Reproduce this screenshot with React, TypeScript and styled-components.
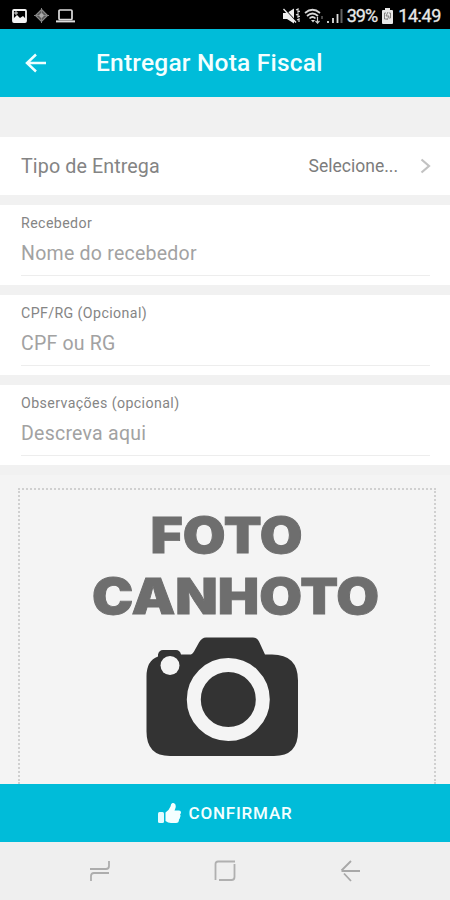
import React from 'react';
import styled, { createGlobalStyle } from 'styled-components';

const GlobalStyle = createGlobalStyle`
  * { box-sizing: border-box; }
  body { margin: 0; background: #f1f1f1; font-family: Roboto, sans-serif; }
`;

const Screen = styled.div`
  width: 450px;
  height: 900px;
  display: flex;
  flex-direction: column;
  overflow: hidden;
  background: #f1f1f1;
`;

const StatusBar = styled.div`
  flex: none;
  height: 29px;
  padding: 2px 9px 0 12px;
  display: flex;
  align-items: center;
  justify-content: space-between;
  background: #000;
  color: #e8e8e8;
`;

const StatusGroup = styled.div<{ $gap: number }>`
  display: flex;
  align-items: center;
  gap: ${(p) => p.$gap}px;
`;

const StatusText = styled.span<{ $spacing?: number }>`
  font-size: 18px;
  line-height: 20px;
  letter-spacing: ${(p) => p.$spacing ?? 0}px;
  white-space: nowrap;
  -webkit-text-stroke: 0.3px #e8e8e8;
`;

const Header = styled.header`
  flex: none;
  height: 68px;
  padding-left: 24px;
  display: flex;
  align-items: center;
  gap: 49px;
  background: #00bcd9;
`;

const Title = styled.h1`
  margin: 0;
  color: #f4ffff;
  font-size: 24.5px;
  line-height: 28px;
  font-weight: 500;
  letter-spacing: 0.22px;
  white-space: nowrap;
`;

const Form = styled.main`
  flex: none;
  padding-top: 40px;
  display: flex;
  flex-direction: column;
  gap: 10px;
`;

const SelectRow = styled.div`
  height: 58px;
  padding: 0 19px 0 21px;
  display: flex;
  align-items: center;
  background: #fff;
`;

const SelectLabel = styled.span`
  flex: 1;
  color: #848484;
  font-size: 19.7px;
  letter-spacing: 0.1px;
`;

const SelectValue = styled.span`
  margin-right: 22px;
  color: #7c7c7c;
  font-size: 17.5px;
`;

const Field = styled.label`
  height: 80px;
  padding: 9px 20px 0 21px;
  display: flex;
  flex-direction: column;
  background: #fff;
`;

const FieldLabel = styled.span`
  height: 18px;
  line-height: 18px;
  color: #858585;
  font-size: 14.2px;
  letter-spacing: 0.4px;
`;

const FieldHint = styled.span<{ $spacing: number }>`
  height: 44px;
  padding-top: 8px;
  border-bottom: 1px solid #ededed;
  line-height: 27px;
  color: #a2a2a2;
  font-size: 19.5px;
  letter-spacing: ${(p) => p.$spacing}px;
`;

const PhotoArea = styled.section`
  flex: 1;
  min-height: 0;
  margin-top: 10px;
  padding: 13px 14px 0 18px;
  background: #f4f4f4;
`;

const PhotoFrame = styled.div`
  height: 100%;
  border: 2px dotted #d0d0d0;
  border-bottom: 0;
  overflow: hidden;
`;

const ConfirmButton = styled.button`
  flex: none;
  height: 58px;
  padding: 0;
  border: 0;
  display: flex;
  align-items: center;
  justify-content: center;
  gap: 8px;
  background: #00bcd9;
  color: #f4ffff;
  font: 500 17px/20px Roboto, sans-serif;
  letter-spacing: 0.8px;
`;

const NavBar = styled.nav`
  flex: none;
  height: 58px;
  padding: 0 37px;
  display: grid;
  grid-template-columns: repeat(3, 1fr);
  place-items: center;
  background: #efefef;
`;

const Icon = styled.svg`
  display: block;
  flex: none;
`;

const fields = [
  { label: 'Recebedor', hint: 'Nome do recebedor', spacing: 0.25 },
  { label: 'CPF/RG (Opcional)', hint: 'CPF ou RG', spacing: 0.2 },
  { label: 'Observações (opcional)', hint: 'Descreva aqui', spacing: 0.25 },
];

function PictureIcon() {
  return (
    <Icon width="15" height="14" viewBox="0 0 15 14">
      <rect x="1" y="1" width="13" height="12" rx="1" fill="none" stroke="#f4f4f4" strokeWidth="1.8" />
      <path d="M1 12V10l4-4 3 3 3-2 3 3v3H1z" fill="#f4f4f4" />
      <path d="M4 2v4M2 4h4" stroke="#ddd" strokeWidth="1" />
    </Icon>
  );
}

function TargetIcon() {
  return (
    <Icon width="15" height="15" viewBox="0 0 15 15">
      <path d="M7.5 1.5l6 6-6 6-6-6z" fill="#555" stroke="#8a8a8a" strokeWidth="1.2" />
      <path d="M7.5 0v15M0 7.5h15" stroke="#858585" />
      <circle cx="7.5" cy="7.5" r="2.2" fill="#aaa" />
    </Icon>
  );
}

function LaptopIcon() {
  return (
    <Icon width="19" height="14" viewBox="0 0 19 14">
      <rect x="3" y="1" width="13" height="9.5" rx="1" fill="none" stroke="#ddd" strokeWidth="1.7" />
      <path d="M0 12.4h19" stroke="#ddd" strokeWidth="2" />
    </Icon>
  );
}

function MuteIcon() {
  return (
    <Icon width="17" height="16" viewBox="0 0 17 16">
      <path d="M0 5h4l7-4.500v15l-7-4.500H0z" fill="#eee" />
      <path d="M1.500 1l12 13" stroke="#000" strokeWidth="1.2" />
      <path d="M.5 1l12.500 13.500" stroke="#eee" strokeWidth="1.3" />
      <path d="M13 2l2-1v3l2-1M13 7l2-1v3l2-1M14 12l2-1v3" fill="none" stroke="#ddd" strokeWidth="1.2" />
    </Icon>
  );
}

function WifiIcon() {
  return (
    <Icon width="19" height="16" viewBox="0 0 19 16">
      <path d="M1 5Q8.500-1.500 16 5M3 8q5.500-5 11 0M5.500 10.500q3-3 6 0" fill="none" stroke="#d8d8d8" strokeWidth="1.7" />
      <path d="M7 12h4l-2 2.500z" fill="#ddd" />
      <path d="M13.500 9v6l-2-2M13.500 15l2-2" fill="none" stroke="#ccc" strokeWidth="1.2" />
      <path d="M18 8v3" stroke="#777" strokeWidth="1.2" />
    </Icon>
  );
}

function SignalIcon() {
  return (
    <Icon width="16" height="15" viewBox="0 0 16 15">
      <path d="M1 13v2M6 10v5M10.500 6v9" stroke="#ddd" strokeWidth="1.8" />
      <path d="M14.500 1v14" stroke="#626262" strokeWidth="2" />
    </Icon>
  );
}

function BatteryIcon() {
  return (
    <Icon width="11" height="16" viewBox="0 0 11 16">
      <path d="M3 0h5v2h2q1 0 1 1v12q0 1-1 1H1q-1 0-1-1V3q0-1 1-1h2z" fill="#e8e8e8" />
      <path d="M4 5H2.500v6H5M7 5h1.500v5H7M6 4L4 8h3l-2 4" fill="none" stroke="#777" strokeWidth="0.9" />
    </Icon>
  );
}

function PhotoPlaceholder() {
  return (
    <Icon width="414" height="290" viewBox="20 490 414 290">
      <g fill="#6e6e6e" stroke="#6e6e6e" strokeWidth="0.9" fontFamily="Inter, sans-serif" fontWeight="900" fontSize="49">
        <text x="150.500" y="553" textLength="152" lengthAdjust="spacingAndGlyphs">FOTO</text>
        <text x="92" y="613.500" textLength="287" lengthAdjust="spacingAndGlyphs">CANHOTO</text>
      </g>
      <path
        d="M173 654.500h18q2-1 3-3l5-9q3-5 7-5h47q4 0 6 4l6 13h7q26 0 26 26v51q0 24.500-24 24.500H170q-23.500 0-23.500-24.500v-55q0-16 11.500-20v-2q1-4.500 5-4.500h13q4 0 5 4.500z"
        fill="#333"
      />
      <circle cx="170" cy="665.500" r="9.500" fill="#f4f4f4" />
      <circle cx="228.300" cy="699.500" r="34.500" fill="none" stroke="#f4f4f4" strokeWidth="14" />
    </Icon>
  );
}

export default function App() {
  return (
    <>
      <GlobalStyle />
      <Screen>
        <StatusBar>
          <StatusGroup $gap={7}>
            <PictureIcon />
            <TargetIcon />
            <LaptopIcon />
          </StatusGroup>
          <StatusGroup $gap={5}>
            <StatusGroup $gap={4}>
              <MuteIcon />
              <WifiIcon />
              <SignalIcon />
              <StatusText $spacing={-1}>39%</StatusText>
            </StatusGroup>
            <BatteryIcon />
            <StatusText $spacing={-0.4}>14:49</StatusText>
          </StatusGroup>
        </StatusBar>
        <Header>
          <Icon width="23" height="20" viewBox="0 0 23 20">
            <path d="M22 10H3M12 1.500L3 10l9 8.500" fill="none" stroke="#efffff" strokeWidth="2.500" />
          </Icon>
          <Title>Entregar Nota Fiscal</Title>
        </Header>
        <Form>
          <SelectRow>
            <SelectLabel>Tipo de Entrega</SelectLabel>
            <SelectValue>Selecione...</SelectValue>
            <Icon width="11" height="16" viewBox="0 0 11 16">
              <path d="M1.500 1.500L9 8l-7.500 6.500" fill="none" stroke="#c2c2c2" strokeWidth="2.200" />
            </Icon>
          </SelectRow>
          {fields.map((f) => (
            <Field key={f.label}>
              <FieldLabel>{f.label}</FieldLabel>
              <FieldHint $spacing={f.spacing}>{f.hint}</FieldHint>
            </Field>
          ))}
        </Form>
        <PhotoArea>
          <PhotoFrame>
            <PhotoPlaceholder />
          </PhotoFrame>
        </PhotoArea>
        <ConfirmButton>
          <Icon width="23" height="21" viewBox="0 0 23 21">
            <rect x="0" y="9" width="6" height="11" rx="1.500" fill="#e4fbff" />
            <path d="M7.500 9.500q4-3 5-6 .5-4 3-3.500 3 .5 2 5l-1 2.500h4.500q2 0 2 2 0 1-1 2 1 1 0 3 0 1-1 2 0 3.500-3 3.500h-5q-3 0-5.500-2z" fill="#f4ffff" />
          </Icon>
          CONFIRMAR
        </ConfirmButton>
        <NavBar>
          <Icon width="22" height="22" viewBox="0 0 22 22" fill="none" stroke="#adadad" strokeWidth="1.800">
            <path d="M1 9h16q3 0 3-3V1M20 13H5q-3 0-3 3v5" />
          </Icon>
          <Icon width="22" height="22" viewBox="0 0 22 22" fill="none" stroke="#b0b0b0" strokeWidth="1.800">
            <path d="M1.500 20V4q0-2.500 2.500-2.500h17M20.500 4v13q0 3-3 3H5" />
          </Icon>
          <Icon width="20" height="22" viewBox="0 0 20 22" fill="none" stroke="#a8a8a8" strokeWidth="1.800">
            <path d="M20 11H1.500M11 1L1.500 10.500M4 13.500L11 21" />
          </Icon>
        </NavBar>
      </Screen>
    </>
  );
}
